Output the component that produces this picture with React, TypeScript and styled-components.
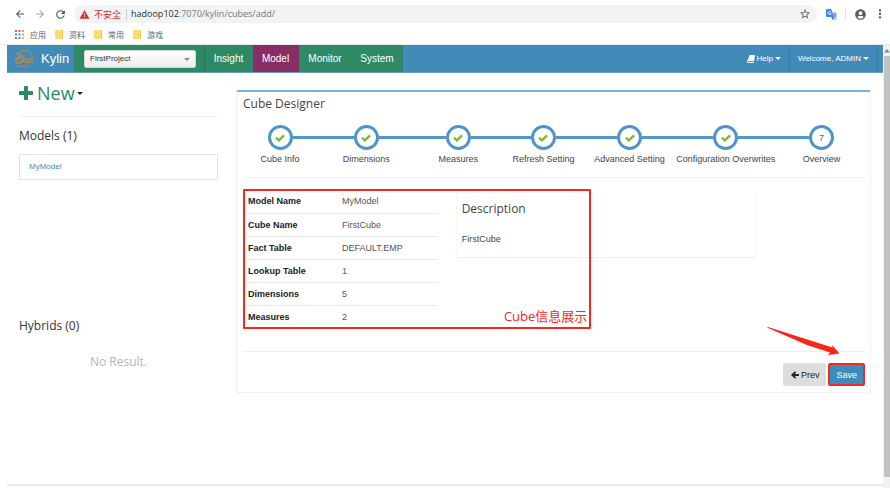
import React from "react";
import styled, { createGlobalStyle } from "styled-components";
import { FaUserCircle } from "react-icons/fa";
import { MdArrowBack, MdArrowForward, MdMoreVert, MdRefresh, MdStarBorder, MdWarning } from "react-icons/md";

const sans = '"Liberation Sans", Arial, "Noto Sans CJK SC", sans-serif';
const display = '"Open Sans", "Noto Sans CJK SC", sans-serif';
const blue = "#428bb9";
const green = "#2e8965";
const red = "#f9261b";

const GlobalStyle = createGlobalStyle`
  *, *::before, *::after { box-sizing: border-box; }
  body { margin: 0; background: #fff; color: #333; font: 9px/12px ${sans}; }
  h1, h2, h3, p, ul { margin: 0; padding: 0; font-weight: 400; }
  button, select { font: inherit; color: inherit; margin: 0; }
  button { border: 0; background: none; padding: 0; cursor: pointer; }
  a { color: inherit; text-decoration: none; }
  svg { display: block; flex: none; }
`;

const Window = styled.div`
  min-height: 100vh;
  display: flex;
  flex-direction: column;
`;

const BrowserBar = styled.div`
  display: flex;
  align-items: center;
  height: 28px;
  padding: 0 3px 0 14px;
  color: #5a5d61;
`;

const NavButton = styled.button<{ $dim?: boolean }>`
  width: 20px;
  color: ${(p) => (p.$dim ? "#a0a2a5" : "#4d5054")};
`;

const AddressBar = styled.div`
  flex: 1;
  display: flex;
  align-items: center;
  gap: 4px;
  height: 18px;
  padding: 0 6px 0 5px;
  border-radius: 9px;
  background: #f1f3f4;
  font: 9px/14px ${display};
`;

const Unsafe = styled.span`
  color: #d03a2c;
  padding-right: 5px;
  border-right: 1px solid #cfd1d4;
  line-height: 11px;
`;

const UrlBox = styled.div`
  flex: 1;
  color: #75797d;
`;

const Host = styled.span`
  color: #2d3033;
`;

const BarTools = styled.div`
  display: flex;
  align-items: center;
  margin-left: 9px;
`;

const ToolDivider = styled.span`
  width: 1px;
  height: 10px;
  margin: 0 9px 0 8px;
  background: #dcdde0;
`;

const MenuButton = styled.button`
  margin-left: 7px;
`;

const Bookmarks = styled.nav`
  display: flex;
  align-items: center;
  gap: 9px;
  height: 17px;
  padding: 0 15px 3px;
  border-bottom: 1px solid #e9eaec;
  color: #606367;
  font: 8px/12px ${display};
`;

const Bookmark = styled.a`
  display: flex;
  align-items: center;
  gap: 6px;
`;

const Folder = styled.span`
  width: 8px;
  height: 9px;
  border-radius: 1px;
  background: #fbdd72;
  border-right: 1px solid #eec64d;
`;

const Viewport = styled.div`
  flex: 1;
  display: flex;
  padding-left: 7px;
`;

const Page = styled.div`
  flex: 1;
  min-width: 0;
  display: flex;
  flex-direction: column;
  border-bottom: 2px solid #e8e8e8;
  margin-bottom: 2px;
`;

const Header = styled.header`
  display: flex;
  height: 28px;
  background: ${blue};
  border-bottom: 1px solid #6aa0b9;
  color: #fff;
`;

const Brand = styled.a`
  display: flex;
  align-items: center;
  gap: 6px;
  width: 67px;
  padding-left: 7px;
  font-size: 13px;
`;

const ProjectCell = styled.div`
  display: flex;
  align-items: center;
  width: 131px;
  padding: 0 8px 0 10px;
  background: ${green};
  border-right: 1px solid #277859;
`;

const SelectWrap = styled.div`
  position: relative;
  flex: 1;
`;

const ProjectSelect = styled.select`
  appearance: none;
  width: 100%;
  height: 18px;
  padding: 0 5px;
  border: 1px solid #d5d5d5;
  border-radius: 2px;
  background: linear-gradient(#fff, #eee);
  color: #333;
  font-size: 8px;
`;

const SelectArrow = styled.span`
  position: absolute;
  right: 6px;
  top: 8px;
  color: #888;
  pointer-events: none;
`;

const Tab = styled.a<{ $active?: boolean; $width: number }>`
  display: flex;
  align-items: center;
  justify-content: center;
  width: ${(p) => p.$width}px;
  background: ${(p) => (p.$active ? "#892e65" : green)};
  border-right: 1px solid ${(p) => (p.$active ? "#892e65" : "#367f78")};
  font-size: 10px;
`;

const HeaderLinks = styled.div`
  display: flex;
  margin-left: auto;
  padding-right: 5px;
`;

const HeaderButton = styled.button`
  display: flex;
  align-items: center;
  gap: 2px;
  padding: 0 8px;
  border-right: 1px solid #377ba6;
  font-size: 8px;
`;

const Columns = styled.div`
  display: grid;
  grid-template-columns: 199fr 635fr;
  column-gap: 18px;
  align-items: start;
  padding: 0 12px;
`;

const Sidebar = styled.aside`
  display: flex;
  flex-direction: column;
  padding-top: 7px;
`;

const NewButton = styled.button`
  display: flex;
  align-items: center;
  gap: 4px;
  height: 26px;
  color: ${green};
  font: 18px/26px ${display};
`;

const NewCaret = styled.span`
  color: #222;
  margin-left: -2px;
`;

const Rule = styled.hr`
  width: 100%;
  height: 1px;
  margin: 0;
  border: 0;
  background: #eee;
`;

const SideTitle = styled.h2`
  font: 12px/16px ${display};
  color: #333;
`;

const ModelList = styled.ul`
  list-style: none;
  margin: 10px 0 138px;
  border: 1px solid #e2e2e2;
`;

const ModelItem = styled.li`
  padding: 6px 9px;
  color: #428bca;
  font-size: 8px;
`;

const SideSection = styled.section`
  padding-top: 11px;
`;

const SideRule = styled(Rule)`
  margin-top: 10px;
`;

const Empty = styled.p`
  margin-top: 20px;
  text-align: center;
  color: #b5b5b5;
  font: 12px/16px ${display};
`;

const Panel = styled.main`
  margin-top: 17px;
  border: 1px solid #f1f1f1;
  border-top: 2px solid #78b3d8;
  border-radius: 2px;
  padding: 0 5px 0 6px;
`;

const PanelTitle = styled.h1`
  padding-top: 4px;
  font: 12px/16px ${display};
  color: #444;
`;

const Steps = styled.ol`
  display: grid;
  grid-template-columns: 74fr 98fr 86fr 84fr 88fr 104fr 87fr;
  list-style: none;
  margin: 13px 0 12px;
  padding: 0;
`;

const Step = styled.li`
  display: flex;
  flex-direction: column;
  align-items: center;
  gap: 3px;
  min-width: 0;
  white-space: nowrap;
  color: #444;
`;

const StepTrack = styled.div`
  align-self: stretch;
  display: flex;
  align-items: center;
`;

const Connector = styled.span<{ $hidden?: boolean }>`
  flex: 1;
  height: 3px;
  background: ${(p) => (p.$hidden ? "transparent" : "#5297cb")};
`;

const Circle = styled.span`
  display: flex;
  align-items: center;
  justify-content: center;
  width: 25px;
  height: 25px;
  border: 3px solid #4f94c9;
  border-radius: 50%;
  color: #666;
`;

const Overview = styled.section`
  position: relative;
  display: grid;
  grid-template-columns: 192fr 302fr 90fr;
  column-gap: 18px;
  align-items: start;
  padding: 12px 0 23px 3px;
`;

const InfoTable = styled.table`
  width: 100%;
  border-collapse: collapse;
  table-layout: fixed;
  text-align: left;

  th, td { height: 23px; padding: 0 2px; }
  th { width: 49%; color: #222; font-weight: 700; }
  td { color: #555; }
  tr + tr { border-top: 1px solid #e8e8e8; }
`;

const Description = styled.div`
  grid-column: 2;
  padding: 10px 5px 12px;
  border: 1px solid #f8f8f8;
  border-top-color: #fff;
  border-bottom-color: #ececec;
  border-radius: 2px;
  color: #444;
`;

const DescriptionTitle = styled.h3`
  margin-bottom: 16px;
  font: 12px/16px ${display};
`;

const Highlight = styled.div`
  position: absolute;
  top: 11px;
  left: 0;
  width: 56%;
  height: 140px;
  border: 2px solid ${red};
  border-radius: 1px;
  display: flex;
  align-items: flex-end;
  justify-content: flex-end;
  padding: 0 2px 3px;
  color: ${red};
  font: 13px/16px ${display};
  pointer-events: none;
`;

const Actions = styled.div`
  position: relative;
  display: flex;
  justify-content: flex-end;
  gap: 2px;
  padding: 11px 0 6px;
`;

const PrevButton = styled.button`
  display: flex;
  align-items: center;
  gap: 2px;
  height: 23px;
  padding: 0 7px 0 8px;
  border-radius: 2px;
  background: #ddd;
  color: #222;
`;

const SaveButton = styled.button`
  height: 23px;
  padding: 0 6px;
  border: 2px solid ${red};
  border-radius: 2px;
  background: #3c8dbc;
  color: #fff;
`;

const Pointer = styled.svg`
  position: absolute;
  right: 25px;
  top: -25px;
  pointer-events: none;
`;

const Scrollbar = styled.div`
  display: flex;
  flex-direction: column;
  width: 7px;
  padding: 4px 0 11px 1px;
  background: #f1f1f1;
  color: #8a8a8a;
`;

const Thumb = styled.span`
  flex: 1;
  margin-top: 3px;
  background: #c1c1c1;
`;

const Caret = () => (
  <svg width="6" height="3" viewBox="0 0 6 3" fill="currentColor"><path d="M0 0h6L3 3z" /></svg>
);

const PlusIcon = () => (
  <svg width="14" height="14" viewBox="0 0 14 14" fill="currentColor">
    <path d="M5.800 0h2.400q.8 0 .8.800V5h4.200q.8 0 .8.800v2.400q0 .8-.8.800H9v4.200q0 .8-.8.800H5.800q-.8 0-.8-.8V9H.8Q0 9 0 8.200V5.800Q0 5 .8 5H5V.8Q5 0 5.800 0z" />
  </svg>
);

const CheckIcon = () => (
  <svg width="10" height="8" viewBox="0 0 10 8" fill="none" stroke="#84b832" strokeWidth="2.400">
    <path d="M1 3.700L3.900 6.400 9 1.300" />
  </svg>
);

const BookIcon = () => (
  <svg width="8" height="8" viewBox="0 0 8 8" fill="currentColor">
    <path d="M2.700 0h4.800q.6.100.4.700L6.500 5.400q-.2.600-.8.600H1.400q-.6.100-.5.500.1.500.7.500h4.600L7.700 2.300q.4.200.2.700L6.700 7.200q-.2.800-1 .8H1.500Q.2 7.900 0 6.700z" />
  </svg>
);

const LeftArrowIcon = () => (
  <svg width="8" height="8" viewBox="0 0 8 8" fill="none" stroke="currentColor" strokeWidth="1.800">
    <path d="M4.600 .8L1.300 4l3.300 3.200M1.600 4H8" />
  </svg>
);

const KylinLogo = () => (
  <svg width="21" height="19" viewBox="0 0 21 19" fill="none" stroke="#c08a3e" strokeLinecap="round">
    <path d="M5 3.200C8 .2 14.500.4 17.300 5c1 1.800 1.300 3.600.7 5.400" strokeWidth="1" />
    <path d="M2 16.500c3.500 1.800 8.700 1.700 12.500.1" strokeWidth=".9" />
    <path d="M3.200 4.400c1.700.1 2.800 1.300 2.400 2.900-.3 1.200-1.900 1.500-2.900 2.500-1.400 1.400-1.200 3.500.3 4.300" strokeWidth="1.700" />
    <path d="M4.500 9.500c2-.6 3.700.2 3.900 1.700.1 1.500-1.500 2.600-3.600 2.700M7 6.500c1 .2 1.700.8 2.200 1.800" strokeWidth="1.400" />
    <path d="M11.800 9.600c-1.700-.1-2.500 1-2.300 2.200.2 1.400 2.200 1.700 3.100.7.900-1 .6-2.700-.8-2.900zM13 12.500l1.200 1.300" strokeWidth="1.200" />
    <path d="M17 9.900c-1.500-.3-2.500.7-2.400 1.900.2 1.400 2.200 1.800 3.300.9 1-.9.600-2.500-.9-2.800z" strokeWidth="1.200" />
  </svg>
);

const appColors = ["#e2574c", "#e2574c", "#f0a03c", "#45a75a", "#4a87ee", "#f0a03c", "#45a75a", "#4a87ee", "#f2b632"];

const AppsIcon = () => (
  <svg width="9" height="9" viewBox="0 0 9 9">
    {appColors.map((c, i) => (
      <rect key={i} x={(i % 3) * 3.5} y={Math.floor(i / 3) * 3.5} width="2" height="2" fill={c} />
    ))}
  </svg>
);

const TranslateIcon = () => (
  <svg width="11" height="11" viewBox="0 0 11 11">
    <path d="M4 3h6l.8.800v6.400l-.8.800H6.500z" fill="#c3c9d3" />
    <path d="M.8 0h4.400l2.600 8H.8L0 7.200V.8z" fill="#4285f4" />
    <path d="M5.500 8h2.300L6.500 11z" fill="#3367d6" />
    <path d="M4.900 3.200a1.500 1.500 0 1 0 .2 1.200H3.800" fill="none" stroke="#fff" strokeWidth=".8" />
    <path d="M7.500 5.500h2.700M8.800 4.800v.7M9.700 5.600c-.3 1.300-1 2-1.700 2.600M8 6.300l1.700 2" fill="none" stroke="#607088" strokeWidth=".6" />
  </svg>
);

const steps = ["Cube Info", "Dimensions", "Measures", "Refresh Setting", "Advanced Setting", "Configuration Overwrites", "Overview"];

const tabs = [
  { label: "Insight", width: 48 },
  { label: "Model", width: 46, active: true },
  { label: "Monitor", width: 53 },
  { label: "System", width: 51 },
];

const info = [
  ["Model Name", "MyModel"],
  ["Cube Name", "FirstCube"],
  ["Fact Table", "DEFAULT.EMP"],
  ["Lookup Table", "1"],
  ["Dimensions", "5"],
  ["Measures", "2"],
];

export default function App() {
  return (
    <Window>
      <GlobalStyle />
      <BrowserBar>
        <NavButton aria-label="Back"><MdArrowBack size={12} /></NavButton>
        <NavButton aria-label="Forward" $dim><MdArrowForward size={12} /></NavButton>
        <NavButton aria-label="Reload"><MdRefresh size={13} /></NavButton>
        <AddressBar>
          <MdWarning size={11} color="#d03a2c" />
          <Unsafe>不安全</Unsafe>
          <UrlBox><Host>hadoop102</Host>:7070/kylin/cubes/add/</UrlBox>
          <button aria-label="Bookmark this page"><MdStarBorder size={12} /></button>
        </AddressBar>
        <BarTools>
          <button aria-label="Translate"><TranslateIcon /></button>
          <ToolDivider />
          <button aria-label="Profile"><FaUserCircle size={11} /></button>
          <MenuButton aria-label="Menu"><MdMoreVert size={14} /></MenuButton>
        </BarTools>
      </BrowserBar>
      <Bookmarks>
        <Bookmark href="#apps"><AppsIcon />应用</Bookmark>
        {["资料", "常用", "游戏"].map((name) => (
          <Bookmark href="#folder" key={name}><Folder />{name}</Bookmark>
        ))}
      </Bookmarks>
      <Viewport>
        <Page>
          <Header>
            <Brand href="#home"><KylinLogo />Kylin</Brand>
            <ProjectCell>
              <SelectWrap>
                <ProjectSelect aria-label="Project" defaultValue="FirstProject">
                  <option>FirstProject</option>
                </ProjectSelect>
                <SelectArrow><Caret /></SelectArrow>
              </SelectWrap>
            </ProjectCell>
            {tabs.map((t) => (
              <Tab key={t.label} href={`#${t.label}`} $width={t.width} $active={t.active}>{t.label}</Tab>
            ))}
            <HeaderLinks>
              <HeaderButton><BookIcon />Help <Caret /></HeaderButton>
              <HeaderButton>Welcome, ADMIN <Caret /></HeaderButton>
            </HeaderLinks>
          </Header>
          <Columns>
            <Sidebar>
              <NewButton>
                <PlusIcon />New
                <NewCaret><Caret /></NewCaret>
              </NewButton>
              <SideRule />
              <SideSection>
                <SideTitle>Models (1)</SideTitle>
                <ModelList>
                  <ModelItem><a href="#MyModel">MyModel</a></ModelItem>
                </ModelList>
              </SideSection>
              <section>
                <SideTitle>Hybrids (0)</SideTitle>
                <Empty>No Result.</Empty>
              </section>
            </Sidebar>
            <Panel>
              <PanelTitle>Cube Designer</PanelTitle>
              <Steps>
                {steps.map((name, i) => (
                  <Step key={name}>
                    <StepTrack>
                      <Connector $hidden={i === 0} />
                      <Circle>{i < 6 ? <CheckIcon /> : 7}</Circle>
                      <Connector $hidden={i === 6} />
                    </StepTrack>
                    {name}
                  </Step>
                ))}
              </Steps>
              <Rule />
              <Overview>
                <InfoTable>
                  <tbody>
                    {info.map(([name, value]) => (
                      <tr key={name}><th scope="row">{name}</th><td>{value}</td></tr>
                    ))}
                  </tbody>
                </InfoTable>
                <Description>
                  <DescriptionTitle>Description</DescriptionTitle>
                  <p>FirstCube</p>
                </Description>
                <Highlight>Cube信息展示</Highlight>
              </Overview>
              <Rule />
              <Actions>
                <PrevButton><LeftArrowIcon />Prev</PrevButton>
                <SaveButton>Save</SaveButton>
                <Pointer width="73" height="28" viewBox="0 0 73 28" fill={red}>
                  <path d="M0 .5L1 0 65.500 20.500 65 18 72.500 26.500 61 28 63 25.500 40 18z" />
                </Pointer>
              </Actions>
            </Panel>
          </Columns>
        </Page>
        <Scrollbar aria-hidden="true">
          <svg width="6" height="4" viewBox="0 0 6 4"><path d="M3 0l3 3.500H0z" fill="currentColor" /></svg>
          <Thumb />
        </Scrollbar>
      </Viewport>
    </Window>
  );
}
